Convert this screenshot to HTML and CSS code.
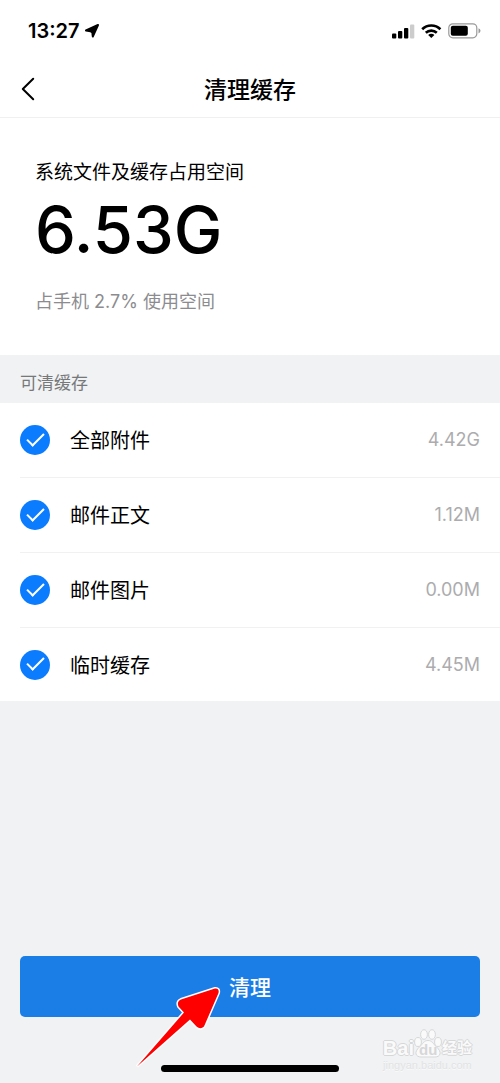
FILE: index.html
```html
<!DOCTYPE html>
<html lang="zh-CN">
<head>
<meta charset="utf-8">
<meta name="viewport" content="width=device-width, initial-scale=1">
<title>清理缓存</title>
<link rel="stylesheet" href="styles.css">
</head>
<body>
<div class="screen">
  <div class="status">
    <div class="status-left">
      <span class="clock">13:27</span>
      <svg class="location" width="14" height="14" viewBox="0 0 14 14" aria-hidden="true"><path d="M13 1 7.800 12.500 7.300 8.500 5.500 7.200 1 6.500Z" fill="#000" stroke="#000" stroke-width="2" stroke-linejoin="round"/></svg>
    </div>
    <div class="status-right">
      <svg width="23" height="16" viewBox="0 0 23 16" aria-hidden="true"><rect x="0" y="10.500" width="4.300" height="5" rx="1"/><rect x="6" y="8" width="4.300" height="7.500" rx="1"/><rect x="12" y="5" width="4.300" height="10.500" rx="1"/><rect x="18" y="1.500" width="4.300" height="14" rx="1" fill="#ccc"/></svg>
      <svg width="21" height="16" viewBox="0 0 21 16" aria-hidden="true"><g fill="none" stroke="#000" stroke-width="2.600"><path d="M1.200 6.200a13 13 0 0 1 18.200 0"/><path d="M4.800 9.800a8 8 0 0 1 11 0"/></g><path d="M10.300 15 7.200 12a4.400 4.400 0 0 1 6.200 0Z"/></svg>
      <svg width="33" height="16" viewBox="0 0 33 16" aria-hidden="true"><rect x=".8" y=".8" width="28" height="14" rx="4" fill="none" stroke="#999" stroke-width="1.200"/><rect x="2.800" y="2.800" width="17" height="10" rx="2"/><path d="M30.500 5.200q2 .8 2 2.600t-2 2.600Z" fill="#999"/></svg>
    </div>
  </div>
  <header class="nav">
    <button class="back" type="button" aria-label="返回"><svg width="14" height="24" viewBox="0 0 14 24" aria-hidden="true"><path d="M12.200 1.800 1.800 12l10.400 10.200" fill="none" stroke="#000" stroke-width="2" stroke-linecap="round" stroke-linejoin="round"/></svg></button>
    <h1 class="title">清理缓存</h1>
  </header>
  <section class="summary">
    <p class="summary-label">系统文件及缓存占用空间</p>
    <p class="total">6.53G</p>
    <p class="share">占手机 2.7% 使用空间</p>
  </section>
  <h2 class="group-title">可清缓存</h2>
  <ul class="list">
    <li class="item"><label class="row"><input class="check" type="checkbox" checked><span class="name">全部附件</span><span class="size">4.42G</span></label></li>
    <li class="item"><label class="row"><input class="check" type="checkbox" checked><span class="name">邮件正文</span><span class="size">1.12M</span></label></li>
    <li class="item"><label class="row"><input class="check" type="checkbox" checked><span class="name">邮件图片</span><span class="size">0.00M</span></label></li>
    <li class="item"><label class="row"><input class="check" type="checkbox" checked><span class="name">临时缓存</span><span class="size">4.45M</span></label></li>
  </ul>
  <footer class="footer">
    <button class="clean" type="button">清理</button>
    <div class="home-bar"></div>
    <svg class="pointer" width="90" height="84" viewBox="0 0 90 84" aria-hidden="true"><path d="M1 81.500 48 27.500 42.500 21.500Q40.500 16.500 45 14.500L79 3.500Q83.500 3 82.500 8L68 41.500Q64.500 45 60.500 41.500L54 34.500Z" fill="#f00" stroke="#fff" stroke-width="3" stroke-linejoin="bevel" paint-order="stroke"/></svg>
    <div class="watermark">
      <div class="brand">
        <span>Bai</span>
        <span class="paw"><svg width="28" height="30" viewBox="0 0 28 30" aria-hidden="true"><g fill="#fafafa" stroke="#d6d7d8"><ellipse cx="4" cy="14" rx="3.400" ry="4.500"/><ellipse cx="10" cy="6.500" rx="3.400" ry="4.800"/><ellipse cx="18" cy="6.500" rx="3.400" ry="4.800"/><ellipse cx="24" cy="14" rx="3.400" ry="4.500"/><path d="M14 12.500c4 0 5 3 8 6 7 6 4 10.500-1 10.500H7c-5 0-8-4.500-1-10.500 3-3 4-6 8-6Z"/></g></svg><span class="du">du</span></span>
        <span class="brand-cn">经验</span>
      </div>
      <div class="site">jingyan.baidu.com</div>
    </div>
  </footer>
</div>
</body>
</html>
```
FILE: styles.css
```css
* { box-sizing: border-box; }

body {
  margin: 0;
  background: #f0f2f4;
  color: #000;
  font-family: Inter, "Noto Sans CJK SC", sans-serif;
}

h1, h2, p, ul { margin: 0; padding: 0; }

.screen {
  display: flex;
  flex-direction: column;
  min-height: 100vh;
}

.status {
  display: flex;
  justify-content: space-between;
  align-items: center;
  height: 60px;
  padding: 2px 19px 0 28px;
  background: #fff;
}

.status-left { display: flex; align-items: center; gap: 5px; }
.status-right { display: flex; align-items: center; gap: 6px; }
.clock { font-size: 20px; line-height: 24px; font-weight: 600; }

.nav {
  display: grid;
  grid-template-columns: 60px 1fr 60px;
  align-items: center;
  height: 58px;
  border-bottom: 1px solid #f0f0f0;
  background: #fff;
}

.back {
  display: flex;
  padding: 0 0 0 21px;
  border: 0;
  background: none;
}

.title {
  padding-top: 2px;
  font-size: 23px;
  line-height: 32px;
  font-weight: 500;
  text-align: center;
}

.summary {
  padding: 40px 35px 38px;
  background: #fff;
}

.summary-label { font-size: 19px; line-height: 30px; }
.total { font-size: 65px; line-height: 84px; font-weight: 500; }
.share { padding-top: 15px; font-size: 18px; line-height: 30px; color: #8c8c90; }

.group-title {
  padding: 16px 20px 8px;
  font-size: 17px;
  line-height: 24px;
  font-weight: 400;
  color: #77787a;
}

.list {
  background: #fff;
  list-style: none;
}

.item { padding-left: 20px; }

.row {
  display: flex;
  align-items: center;
  gap: 20px;
  height: 75px;
  padding-right: 20px;
  border-bottom: 1px solid #f1f1f2;
}

.item:last-child .row { height: 73px; border-bottom: 0; }

.check {
  display: grid;
  place-items: center;
  flex: none;
  width: 30px;
  height: 30px;
  margin: 0;
  border-radius: 50%;
  background: #ccc;
  appearance: none;
}

.check:checked { background: #0c7cff; }

.check:checked::before {
  content: "";
  width: 15px;
  height: 7px;
  margin-bottom: 6px;
  border: solid #fff;
  border-width: 0 0 2px 2px;
  transform: rotate(-45deg);
}

.name { flex: 1; padding-top: 2px; font-size: 20px; line-height: 30px; }
.size { font-size: 18px; line-height: 30px; color: #acacae; }

.footer {
  position: relative;
  display: flex;
  flex-direction: column;
  align-items: center;
  gap: 48px;
  margin-top: auto;
  padding: 0 20px 11px;
}

.clean {
  width: 100%;
  height: 61px;
  padding: 2px 0 0;
  border: 0;
  border-radius: 5px;
  background: #1b7ee6;
  color: #fff;
  font-family: inherit;
  font-size: 21px;
  line-height: 30px;
  font-weight: 500;
}

.home-bar {
  width: 178px;
  height: 7px;
  border-radius: 4px;
  background: #000;
}

.pointer { position: absolute; left: 136px; bottom: 14px; }

.watermark {
  position: absolute;
  right: 28px;
  bottom: 10px;
  color: #fafafa;
  text-shadow: 0 1px #d6d7d8, 1px 0 #d6d7d8, 0 -1px #d6d7d8, -1px 0 #d6d7d8;
  font-family: "Liberation Sans", "Noto Sans CJK SC", sans-serif;
}

.brand {
  display: flex;
  align-items: flex-end;
  font-size: 20px;
  line-height: 20px;
  font-weight: 700;
}

.brand-cn { font-size: 15px; }
.paw { position: relative; display: flex; }
.du { position: absolute; left: 5px; bottom: -2px; font-size: 15px; color: #d6d7d8; text-shadow: none; }
.site { font-size: 11px; line-height: 15px; text-align: center; color: #e2e3e4; text-shadow: 0 1px #fafafa; }
```
